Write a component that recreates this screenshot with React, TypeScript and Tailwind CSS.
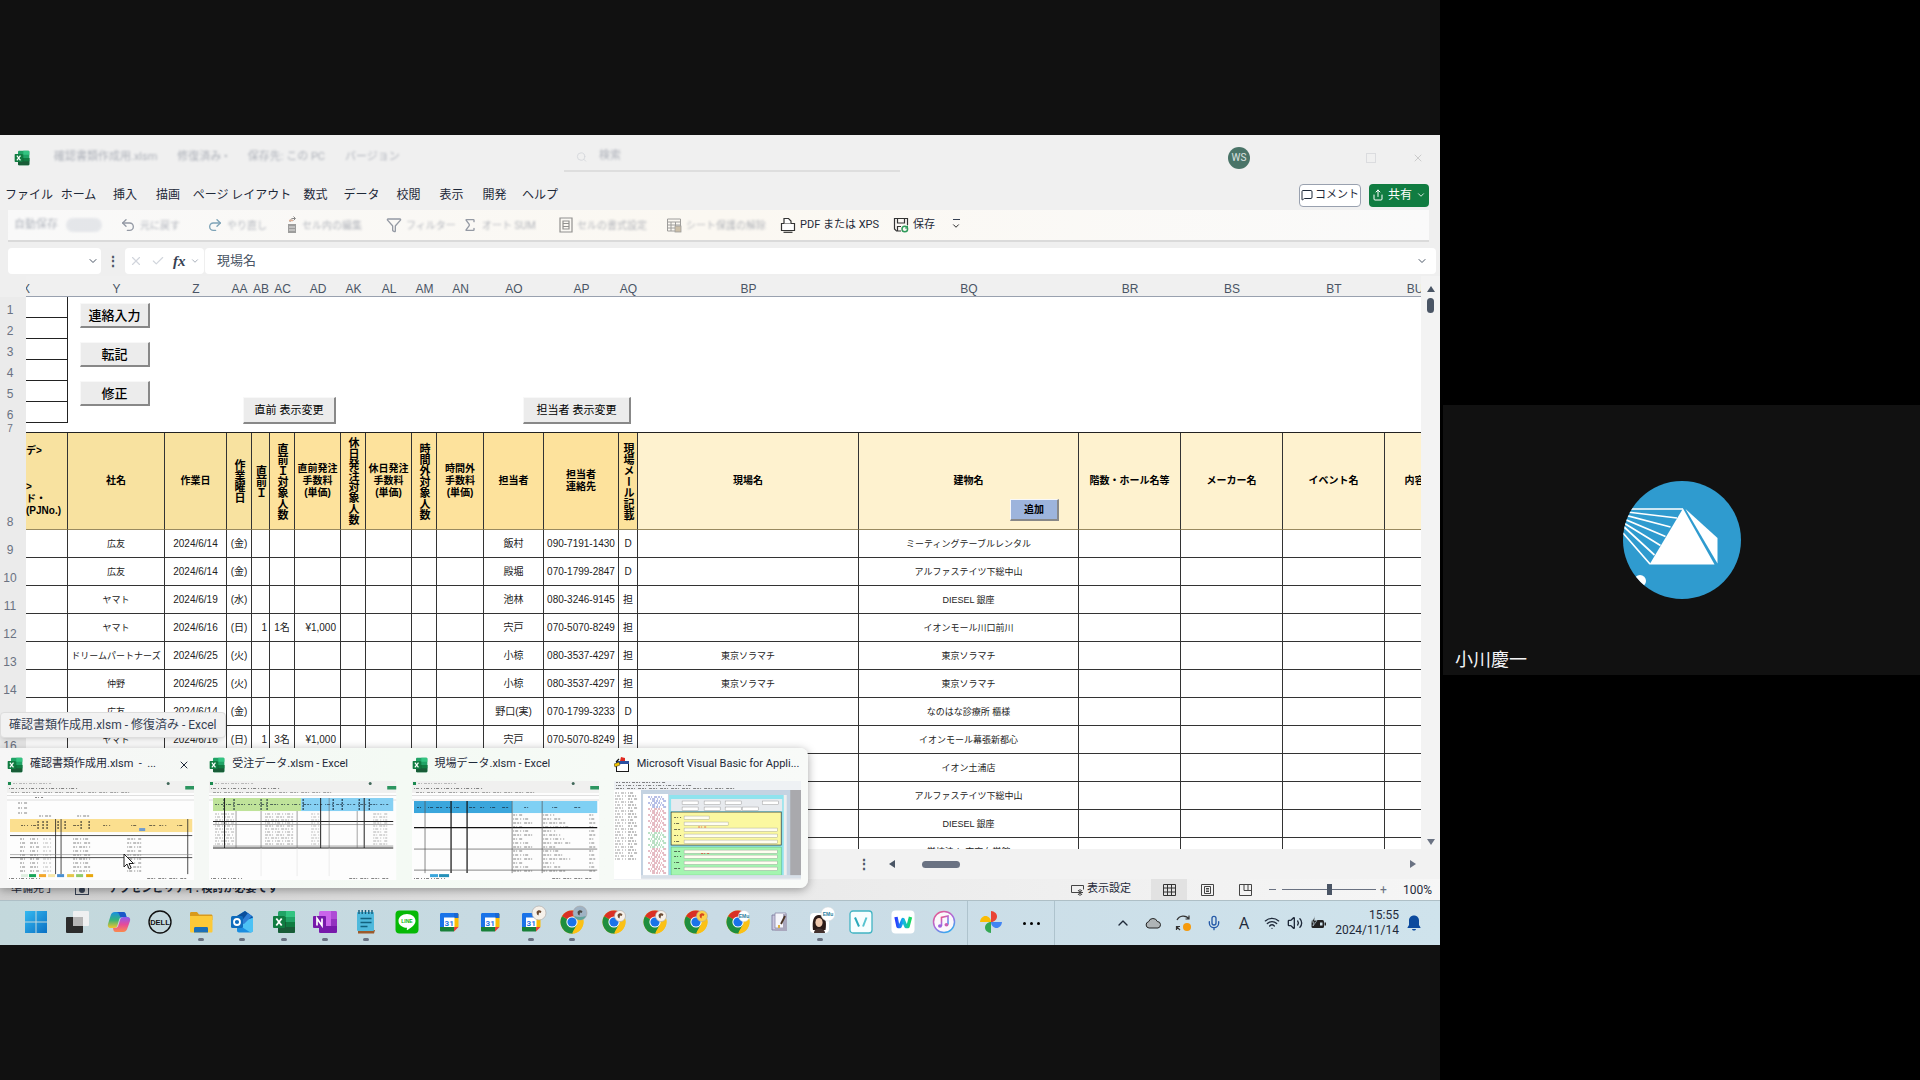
import React from "react";
import {
  ChevronDown,
  ChevronUp,
  Undo2,
  Redo2,
  Filter,
  Sigma,
  X,
  Check,
  Mic,
  Wifi,
  Volume2,
  MessageSquare,
  Search,
  Share,
} from "lucide-react";

/* ---------- sheet data ---------- */

type Column = {
  letter: string;
  width: string;
  title: string[];
  vertical?: boolean;
  tone: string;
  align?: string;
};

const WARM = "bg-[#f8e2a0]";
const WARM2 = "bg-[#fde29c]";
const PALE = "bg-[#fef2cf]";

const columns: Column[] = [
  { letter: "X", width: "w-[42px]", title: ["デ>", "", "", ">", "ド・", "(PJNo.)"], tone: WARM },
  { letter: "Y", width: "w-[97px]", title: ["社名"], tone: WARM },
  { letter: "Z", width: "w-[62px]", title: ["作業日"], tone: WARM },
  { letter: "AA", width: "w-[25px]", title: ["作業曜日"], vertical: true, tone: WARM },
  { letter: "AB", width: "w-[18px]", title: ["直前Ｉ"], vertical: true, tone: WARM, align: "text-right pr-[2px]" },
  { letter: "AC", width: "w-[25px]", title: ["直前Ｉ対象人数"], vertical: true, tone: WARM2 },
  { letter: "AD", width: "w-[46px]", title: ["直前発注", "手数料", "(単価)"], tone: WARM2, align: "text-right pr-1" },
  { letter: "AK", width: "w-[25px]", title: ["休日発注対象人数"], vertical: true, tone: WARM2 },
  { letter: "AL", width: "w-[46px]", title: ["休日発注", "手数料", "(単価)"], tone: WARM2 },
  { letter: "AM", width: "w-[25px]", title: ["時間外対象人数"], vertical: true, tone: WARM2 },
  { letter: "AN", width: "w-[47px]", title: ["時間外", "手数料", "(単価)"], tone: WARM2 },
  { letter: "AO", width: "w-[60px]", title: ["担当者"], tone: WARM2 },
  { letter: "AP", width: "w-[75px]", title: ["担当者", "連絡先"], tone: WARM2 },
  { letter: "AQ", width: "w-[19px]", title: ["現場メール記載"], vertical: true, tone: WARM2 },
  { letter: "BP", width: "w-[221px]", title: ["現場名"], tone: PALE },
  { letter: "BQ", width: "w-[220px]", title: ["建物名"], tone: PALE },
  { letter: "BR", width: "w-[102px]", title: ["階数・ホール名等"], tone: PALE },
  { letter: "BS", width: "w-[102px]", title: ["メーカー名"], tone: PALE },
  { letter: "BT", width: "w-[102px]", title: ["イベント名"], tone: PALE },
  { letter: "BU", width: "w-[60px]", title: ["内容"], tone: PALE },
];

type Row = Record<string, string>;

const rows: Row[] = [
  { Y: "広友", Z: "2024/6/14", AA: "(金)", AO: "飯村", AP: "090-7191-1430", AQ: "D", BQ: "ミーティングテーブルレンタル" },
  { Y: "広友", Z: "2024/6/14", AA: "(金)", AO: "殿堀", AP: "070-1799-2847", AQ: "D", BQ: "アルファステイツ下総中山" },
  { Y: "ヤマト", Z: "2024/6/19", AA: "(水)", AO: "池林", AP: "080-3246-9145", AQ: "担", BQ: "DIESEL 銀座" },
  { Y: "ヤマト", Z: "2024/6/16", AA: "(日)", AB: "1", AC: "1名", AD: "¥1,000", AO: "宍戸", AP: "070-5070-8249", AQ: "担", BQ: "イオンモール川口前川" },
  { Y: "ドリームパートナーズ", Z: "2024/6/25", AA: "(火)", AO: "小椋", AP: "080-3537-4297", AQ: "担", BP: "東京ソラマチ", BQ: "東京ソラマチ" },
  { Y: "仲野", Z: "2024/6/25", AA: "(火)", AO: "小椋", AP: "080-3537-4297", AQ: "担", BP: "東京ソラマチ", BQ: "東京ソラマチ" },
  { Y: "広友", Z: "2024/6/14", AA: "(金)", AO: "野口(実)", AP: "070-1799-3233", AQ: "D", BQ: "なのはな診療所 櫃様" },
  { Y: "ヤマト", Z: "2024/6/16", AA: "(日)", AB: "1", AC: "3名", AD: "¥1,000", AO: "宍戸", AP: "070-5070-8249", AQ: "担", BQ: "イオンモール幕張新都心" },
  { BQ: "イオン土浦店" },
  { BQ: "アルファステイツ下総中山" },
  { BQ: "DIESEL 銀座" },
  { BQ: "学校法人 東京女学館" },
];

const menus = [
  { label: "ファイル", width: "w-[50px]" },
  { label: "ホーム", width: "w-[49px]" },
  { label: "挿入", width: "w-[44px]" },
  { label: "描画", width: "w-[42px]" },
  { label: "ページ レイアウト", width: "w-[106px]" },
  { label: "数式", width: "w-[41px]" },
  { label: "データ", width: "w-[51px]" },
  { label: "校閲", width: "w-[43px]" },
  { label: "表示", width: "w-[43px]" },
  { label: "開発", width: "w-[43px]" },
  { label: "ヘルプ", width: "w-[48px]" },
];

/* ---------- icons ---------- */

function ExcelIcon({ className = "w-4 h-4" }: { className?: string }) {
  return (
    <svg viewBox="0 0 24 24" className={className} aria-hidden="true">
      <rect x="6" y="1" width="17" height="22" rx="1.500" fill="#21a366" />
      <path d="M6 12h17v9.500a1.500 1.500 0 0 1-1.500 1.500h-14A1.500 1.500 0 0 1 6 21.500z" fill="#185c37" />
      <path d="M14 1h7.500A1.500 1.500 0 0 1 23 2.500V7h-9z" fill="#33c481" />
      <path d="M6 7h8v5H6z" fill="#107c41" />
      <path d="M14 12h9v5h-9z" fill="#107c41" />
      <rect x="1" y="6" width="12" height="12" rx="1" fill="#107c41" />
      <path d="M4.300 8.500 9.700 15.500M9.700 8.500 4.300 15.500" stroke="#fff" strokeWidth="1.800" />
    </svg>
  );
}

function CellsIcon() {
  return (
    <svg viewBox="0 0 12 18" className="w-3 h-[18px]">
      <path d="M4 6c0-2 1-3.500 3-3.500h2M7.500.500l2 2-2 2" fill="none" stroke="#555" />
      <path d="M3 4.500h4" stroke="#d8906a" strokeWidth="1.500" />
      <path d="M2 8h8v9H2z" fill="#777" />
      <path d="M3 11h6M3 14h6" stroke="#ddd" />
    </svg>
  );
}

function FormatIcon() {
  return (
    <svg viewBox="0 0 14 16" className="w-3.5 h-4">
      <path d="M1 1h12v14H1z" fill="none" stroke="#666" strokeWidth="1.200" />
      <path d="M4 4h6v8H4zM4 6.500h6M4 9.500h6" fill="none" stroke="#666" strokeWidth="1.200" />
    </svg>
  );
}

function ProtectIcon() {
  return (
    <svg viewBox="0 0 16 16" className="w-4 h-4">
      <path d="M1.500 2h13v12h-13zM1.500 5h13M5 5v9M9.500 5v9M1.500 8h13M1.500 11h13" fill="none" stroke="#777" />
      <rect x="9" y="9" width="6" height="6" fill="#b8a78a" stroke="#777" strokeWidth="0.800" />
    </svg>
  );
}

function PdfIcon() {
  return (
    <svg viewBox="0 0 16 16" className="w-4 h-4">
      <path d="M1.500 6.500h13v7h-13z" fill="#fff" stroke="#333" strokeWidth="1.200" />
      <path d="M4 6.500V1.500h4.500l2.500 2.500v2.500" fill="#fff" stroke="#333" strokeWidth="1.200" />
      <path d="M3.500 15.300h9" stroke="#333" strokeWidth="1.200" />
    </svg>
  );
}

function SaveIcon() {
  return (
    <svg viewBox="0 0 16 16" className="w-4 h-4">
      <path d="M8 14H3.500L1.500 12V1.500h13V8" fill="none" stroke="#333" strokeWidth="1.200" />
      <path d="M4.500 1.500v4.500h7V1.500M4.500 14V9.500H8" fill="none" stroke="#333" strokeWidth="1.200" />
      <circle cx="11.800" cy="12" r="2.800" fill="none" stroke="#2f9a5a" strokeWidth="1.500" />
      <path d="M14.500 8.500V11H12" fill="none" stroke="#2f9a5a" />
    </svg>
  );
}

function WindowsIcon() {
  return (
    <svg viewBox="0 0 24 24" className="w-6 h-6">
      <defs>
        <linearGradient id="win" x1="0" y1="0" x2="1" y2="1">
          <stop offset="0" stopColor="#35b9f0" />
          <stop offset="1" stopColor="#0a70c4" />
        </linearGradient>
      </defs>
      <path d="M1 1h10.500v10.500H1zM12.500 1H23v10.500H12.500zM1 12.500h10.500V23H1zM12.500 12.500H23V23H12.500z" fill="url(#win)" />
    </svg>
  );
}

function TaskViewIcon() {
  return (
    <svg viewBox="0 0 24 24" className="w-6 h-6">
      <rect x="1" y="7" width="17" height="16" rx="1" fill="#2c2c2c" />
      <rect x="8" y="1" width="16" height="15" rx="1" fill="#f2f2f2" fillOpacity="0.92" />
      <path d="M8 7h10v9H8z" fill="#b5b5b5" />
    </svg>
  );
}

function CopilotIcon() {
  return (
    <svg viewBox="0 0 24 24" className="w-6 h-6">
      <defs>
        <linearGradient id="cpa" x1="0" y1="0" x2="0" y2="1">
          <stop offset="0" stopColor="#1a8fe3" />
          <stop offset="0.500" stopColor="#35b37a" />
          <stop offset="1" stopColor="#f5c52b" />
        </linearGradient>
        <linearGradient id="cpb" x1="0" y1="0" x2="0" y2="1">
          <stop offset="0" stopColor="#8b5cf0" />
          <stop offset="0.500" stopColor="#e64a9a" />
          <stop offset="1" stopColor="#fb8a4c" />
        </linearGradient>
      </defs>
      <path d="M8 2h8c2 0 2.500 1 3 3l.5 2h-4c-2 0-3 1-3.500 3l-1.500 5c-.5 2-1.500 3-3 3H4c-3 0-3.500-2-3-4l2.500-8C4.200 3.500 5.500 2 8 2z" fill="url(#cpa)" />
      <path d="M16 22H9c-2 0-2.500-1-3-4h2c2 0 3-1 3.500-3L13 10c.5-2 1.500-3 3.500-3H20c3 0 3.500 2 3 4l-2.500 7c-.8 2.500-2 4-4.500 4z" fill="url(#cpb)" />
      <path d="M8 2h8c2 0 2.500 1 3 3l.5 2h-4c-1 0-1.500.2-2 .6L12 4c-.5-1.500-1.500-2-4-2z" fill="#1b57c8" />
    </svg>
  );
}

function DellIcon() {
  return (
    <svg viewBox="0 0 24 24" className="w-6 h-6">
      <circle cx="12" cy="12" r="11" fill="none" stroke="#111" strokeWidth="1.400" />
      <text x="12" y="15" textAnchor="middle" fontSize="7.500" fontWeight="bold" fontFamily="Liberation Sans, sans-serif" fill="#111">DELL</text>
    </svg>
  );
}

function FolderIcon() {
  return (
    <svg viewBox="0 0 24 24" className="w-6 h-6">
      <path d="M1 3.500C1 2.500 1.500 2 2.500 2H8l2 2.500h12c1 0 1.500.5 1.500 1.500v4H1z" fill="#d99a1c" />
      <path d="M1 6h21.500c.5 0 1 .5 1 1v14c0 1-.5 1.500-1.500 1.500H2.500C1.500 22.500 1 22 1 21z" fill="#fcc938" />
      <path d="M5 22.500v-4c0-1 .5-1.500 1.500-1.500h11c1 0 1.500.5 1.500 1.500v4z" fill="#1a6fb8" />
    </svg>
  );
}

function OutlookIcon() {
  return (
    <svg viewBox="0 0 24 24" className="w-6 h-6">
      <path d="M7 6 15 1l8 6v13c0 1.500-1 2.500-2.500 2.500H9C7.800 22.500 7 21.800 7 20.500z" fill="#1a8de0" />
      <path d="m7 6 8-5 8 6-9 7z" fill="#0b4f9c" />
      <path d="M7 12l16-4v12.500c0 1.200-1 2-2.500 2L7 14z" fill="#4cc2f5" />
      <path d="m10 13 8-10 4 3-8 8z" fill="#2f7fd6" />
      <rect x="1" y="6" width="12" height="12" rx="1.500" fill="#0f6cbd" />
      <circle cx="7" cy="12" r="3" fill="none" stroke="#fff" strokeWidth="1.800" />
    </svg>
  );
}

function OneNoteIcon() {
  return (
    <svg viewBox="0 0 24 24" className="w-6 h-6">
      <rect x="6" y="1" width="18" height="22" rx="1.500" fill="#ca64ea" />
      <path d="M18 1h4.500A1.500 1.500 0 0 1 24 2.500V9h-6z" fill="#ae4bd5" />
      <path d="M18 9h6v7h-6z" fill="#9332bf" />
      <path d="M6 16h18v5.500a1.500 1.500 0 0 1-1.500 1.500h-15A1.500 1.500 0 0 1 6 21.500z" fill="#7719aa" />
      <rect x="0" y="6" width="13" height="12" rx="1" fill="#7719aa" />
      <path d="M4 15.500v-7l5 7v-7" fill="none" stroke="#fff" strokeWidth="1.700" />
    </svg>
  );
}

function NotepadIcon() {
  return (
    <svg viewBox="0 0 24 24" className="w-6 h-6">
      <path d="M4 20h17l-1 3.500H4z" fill="#9c5a2c" />
      <rect x="3" y="2" width="17" height="19" rx="1" fill="#4fb9dc" />
      <path d="M5 0v4M8.200 0v4M11.500 0v4M14.800 0v4M18 0v4" stroke="#155a78" strokeWidth="1.400" />
      <path d="M6.500 8.500h11M6.500 12.500h11M6.500 16.500h7" stroke="#12627f" strokeWidth="1.500" />
    </svg>
  );
}

function LineIcon() {
  return (
    <svg viewBox="0 0 24 24" className="w-6 h-6">
      <rect x="0.500" y="0.500" width="23" height="23" rx="4" fill="#06b906" />
      <path d="M12 4c4.800 0 8.500 3 8.500 7 0 3.500-4 6.500-8 9-.6.400-.8 0-.7-.600l.2-1.600C7 17.700 3.500 14.800 3.500 11c0-4 3.700-7 8.500-7z" fill="#fff" />
      <text x="12" y="13" textAnchor="middle" fontSize="5" fontWeight="bold" fontFamily="Liberation Sans, sans-serif" fill="#06b906">LINE</text>
    </svg>
  );
}

function Badge({ kind, cx = 19, cy = 5, r = 5.5 }: { kind: string; cx?: number; cy?: number; r?: number }) {
  if (kind === "none") return null;
  if (kind === "text") {
    return (
      <g>
        <circle cx={cx} cy={cy} r={r} fill="#fff" stroke="#cfd6da" strokeWidth="0.500" />
        <text x={cx} y={cy + 2} textAnchor="middle" fontSize="5" fontWeight="bold" fontFamily="Liberation Sans, sans-serif" fill="#2b7f9e">EMu</text>
      </g>
    );
  }
  const fill = kind === "yellow" ? "#fbd24a" : kind === "photo" ? "#9fb3c4" : "#f6f1ea";
  const ink = kind === "yellow" ? "#d9481c" : kind === "photo" ? "#4c4a45" : "#6b4a32";
  return (
    <g>
      <circle cx={cx} cy={cy} r={r} fill={fill} stroke="#a9a5a2" strokeWidth="0.600" />
      <path d={`M${cx - 2.5} ${cy - 1}c1-2 3.500-2.500 5-.5l-1 1.500-1.500-.5-.5 3-1.500-1z`} fill={ink} />
      {kind === "photo" && <path d={`M${cx - 6} ${cy + 3}q6 2 12 0-2 4-6 4t-6-4z`} fill="#5fa39a" />}
    </g>
  );
}

function CalendarIcon({ badge = "none" }: { badge?: string }) {
  return (
    <svg viewBox="0 0 24 24" className="w-6 h-6 overflow-visible">
      <path d="M3 4.500C3 3.500 3.700 3 4.500 3H17v5H7v13H4.500C3.700 21 3 20.300 3 19.500z" fill="#1a73e8" />
      <path d="M17 3h3c1 0 1.500.6 1.500 1.500V17H17z" fill="#fbbc04" />
      <path d="M17 3h3c1 0 1.500.6 1.500 1.500V8H17z" fill="#1967d2" />
      <path d="M3 17h14v4.500H4.500C3.600 21.500 3 21 3 20z" fill="#188038" />
      <path d="M17 17h4.500L17 21.500z" fill="#ea4335" />
      <path d="M7 7.500h10.500V17H7z" fill="#fff" />
      <text x="12.200" y="15.500" textAnchor="middle" fontSize="8" fontFamily="Roboto, sans-serif" fill="#1a73e8" fontWeight="bold">31</text>
      <Badge kind={badge} cx={20} cy={3} r={7} />
    </svg>
  );
}

function ChromeIcon({ badge }: { badge: string }) {
  const large = badge === "photo";
  return (
    <svg viewBox="0 0 24 24" className="w-6 h-6 overflow-visible">
      <circle cx="12" cy="12" r="11.500" fill="#fbc116" />
      <path d="M12 12 2 6.300A11.500 11.500 0 0 1 22 6.300z" fill="#d93025" />
      <path d="M2 6.300 12 12l1 11.400A11.500 11.500 0 0 1 2 6.300z" fill="#1e8e3e" />
      <path d="m12 23.500 5-9-5-2.500-5 2z" fill="#1e8e3e" />
      <path d="m17.200 14.500-5.200 9A11.500 11.500 0 0 0 22 6.300H12z" fill="#fbc116" />
      <circle cx="12" cy="12" r="5.600" fill="#fff" />
      <circle cx="12" cy="12" r="4.600" fill="#1a73e8" />
      <Badge kind={badge} cx={large ? 20 : 18} cy={large ? 3 : 6} r={large ? 7 : 5.5} />
    </svg>
  );
}

function NotesAppIcon() {
  return (
    <svg viewBox="0 0 24 24" className="w-6 h-6">
      <path d="M5 5h9v15H5z" fill="#c8c5dd" stroke="#77749a" strokeWidth="0.800" />
      <path d="M8 3h11v15H8z" fill="#f5f5fb" stroke="#8c89a8" strokeWidth="0.800" />
      <path d="M16 4h4v17H8v-3h8z" fill="#a9a7bd" />
      <path d="m18 6-4 8" stroke="#4a3526" strokeWidth="1.800" />
      <path d="M12 15v3" stroke="#e0b040" strokeWidth="2" />
    </svg>
  );
}

function PortraitIcon() {
  return (
    <svg viewBox="0 0 24 24" className="w-6 h-6 overflow-visible">
      <rect x="2" y="3" width="19" height="20" rx="4" fill="#fff" />
      <path d="M5 20C4 12 5 5 11 5s8 6 6.500 15z" fill="#2b1a17" />
      <ellipse cx="11" cy="12.500" rx="3.600" ry="4.600" fill="#f0c9ae" />
      <path d="M6 23c0-3 2-4.500 5-4.500s6 1.500 6 4.500z" fill="#42302d" />
      <Badge kind="text" cx={20} cy={4} r={7} />
    </svg>
  );
}

function VIcon() {
  return (
    <svg viewBox="0 0 24 24" className="w-6 h-6">
      <rect x="1" y="1" width="22" height="22" rx="3" fill="#f7feff" stroke="#42b4c4" strokeWidth="1.300" />
      <path d="m6 7.500 4 9" stroke="#2aa9bb" strokeWidth="2" />
      <path d="m17.500 7.500-3.500 9" stroke="#56c3d0" strokeWidth="2" />
    </svg>
  );
}

function WIcon() {
  return (
    <svg viewBox="0 0 24 24" className="w-6 h-6">
      <defs>
        <linearGradient id="wgrad" x1="0" y1="0" x2="1" y2="0">
          <stop offset="0" stopColor="#2b3bff" />
          <stop offset="0.500" stopColor="#10b5e8" />
          <stop offset="1" stopColor="#18d860" />
        </linearGradient>
      </defs>
      <rect x="0.500" y="0.500" width="23" height="23" rx="4" fill="#fff" />
      <path d="M5 7l2 9.500h2l3-7 3 7h2L19.500 7" fill="none" stroke="url(#wgrad)" strokeWidth="3.400" strokeLinejoin="round" />
    </svg>
  );
}

function MusicIcon() {
  return (
    <svg viewBox="0 0 24 24" className="w-6 h-6">
      <defs>
        <linearGradient id="mus" x1="0" y1="0" x2="0.600" y2="1">
          <stop offset="0" stopColor="#f2557f" />
          <stop offset="0.600" stopColor="#a86be0" />
          <stop offset="1" stopColor="#3aa7ee" />
        </linearGradient>
      </defs>
      <circle cx="12" cy="12" r="10.500" fill="#fbf7fb" stroke="url(#mus)" strokeWidth="1.500" />
      <path d="M9.500 16V7.500l6.500-1.500v8.500" fill="none" stroke="url(#mus)" strokeWidth="1.600" />
      <ellipse cx="8" cy="16" rx="2" ry="1.700" fill="#a05fdc" />
      <ellipse cx="14.500" cy="14.700" rx="2" ry="1.700" fill="#c95fb8" />
    </svg>
  );
}

function PhotosIcon() {
  return (
    <svg viewBox="0 0 24 24" className="w-6 h-6">
      <path d="M12 12V1c3.500.3 6 2.700 6 5.500S15.500 12 12 12z" fill="#ea4335" />
      <path d="M12 12h11c-.3 3.500-2.700 6-5.500 6S12 15.500 12 12z" fill="#4285f4" />
      <path d="M12 12v11c-3.500-.3-6-2.700-6-5.500S8.500 12 12 12z" fill="#34a853" />
      <path d="M12 12H1c.3-3.500 2.700-6 5.500-6S12 8.500 12 12z" fill="#fbbc04" />
    </svg>
  );
}

function VbaIcon() {
  return (
    <svg viewBox="0 0 16 16" className="w-4 h-4">
      <rect x="2.500" y="4.500" width="12" height="10" fill="#fff" stroke="#1a1a1a" />
      <path d="M2 4h13v3H2z" fill="#2a4fa0" />
      <path d="M7 0 11 1v3H6z" fill="#e02a20" />
      <path d="M0 7l5-2 1 3-5 2z" fill="#f2c500" stroke="#222" strokeWidth="0.500" />
      <path d="M5 2 2 5" stroke="#111" strokeWidth="1.200" />
    </svg>
  );
}

/* ---------- window previews ---------- */

const DASH = ["2 1 1 2 3 1", "1 1 3 2 1 2", "3 1 2 1 1 3"];

function Scribble({ x, y, w, color = "#444", i = 0 }: { x: number; y: number; w: number; color?: string; i?: number }) {
  return <path d={`M${x} ${y}h${w}`} stroke={color} strokeWidth="1" strokeOpacity="0.650" strokeDasharray={DASH[i % 3]} />;
}

function range(from: number, to: number, step: number) {
  const out: number[] = [];
  for (let v = from; v <= to; v += step) out.push(v);
  return out;
}

function PreviewChrome({ children }: { children: React.ReactNode }) {
  return (
    <svg viewBox="0 0 187 99" className="w-full h-auto" aria-hidden="true">
      <rect width="187" height="99" fill="#fdfdfd" />
      <rect width="187" height="12" fill="#f0f0ef" />
      <rect x="1" y="1" width="3" height="3" fill="#1c8a50" />
      <Scribble x={6} y={2.5} w={38} color="#999" />
      <circle cx="161" cy="2.500" r="1.500" fill="#41685a" />
      <Scribble x={2} y={7.5} w={70} i={1} />
      <rect x="178" y="5" width="9" height="3.500" fill="#2d9560" />
      <Scribble x={4} y={11.5} w={120} i={2} color="#777" />
      <path d="M0 14.500h187M0 19h187" stroke="#c9c9c9" strokeWidth="0.600" />
      {children}
      <Scribble x={2} y={97.5} w={32} i={1} />
      <Scribble x={140} y={97.5} w={40} i={2} />
    </svg>
  );
}

function PreviewOrders() {
  return (
    <PreviewChrome>
      <Scribble x={28} y={16.5} w={8} />
      {[22, 27, 32].map((y) => (
        <Scribble key={y} x={11} y={y} w={9} />
      ))}
      <Scribble x={32} y={35} w={12} />
      <Scribble x={70} y={35} w={13} />
      <rect x="3" y="38" width="182" height="13" fill="#fbdf8f" />
      {[14, 24, 66, 96, 124, 142, 152, 170].map((x, i) => (
        <Scribble key={x} x={x} y={44.5} w={7} i={i} color="#222" />
      ))}
      {[31, 36, 40, 51, 58, 74, 82].map((x) => (
        <path key={x} d={`M${x} 40v9`} stroke="#222" strokeWidth="1" strokeDasharray="2 1" />
      ))}
      <rect x="132" y="47" width="6" height="3" fill="#6f9bd0" />
      {range(58, 90, 4).map((y, i) => (
        <g key={y}>
          <Scribble x={13} y={y} w={5} i={i} />
          <Scribble x={23} y={y} w={10} i={i + 1} />
          <Scribble x={36} y={y} w={8} i={i} color="#999" />
          <Scribble x={66} y={y} w={17} i={i + 1} />
          <Scribble x={120} y={y} w={14} i={i + 2} />
        </g>
      ))}
      <path d="M3 54.500h182M3 76.500h182M48.500 38v55M54 38v55M180.500 38v55" stroke="#222" strokeWidth="0.800" />
      <path d="M3 73.500h182" stroke="#888" strokeWidth="0.600" />
      {[["14", "#dfeee0"], ["22", "#18a558"], ["32", "#f3a72b"], ["41", "#f5e6a8"], ["50", "#4a8fd0"], ["60", "#e5c64a"], ["69", "#8fca6a"], ["79", "#e8a70e"]].map(([x, fill]) => (
        <rect key={x} x={x} y="93" width="7" height="3" fill={fill} />
      ))}
    </PreviewChrome>
  );
}

function PreviewReceived() {
  return (
    <PreviewChrome>
      <rect x="4" y="17" width="88" height="13" fill="#bfe39a" />
      <rect x="92" y="17" width="92" height="13" fill="#86d0f3" />
      {range(6, 176, 11).map((x, i) => (
        <Scribble key={x} x={x} y={23.5} w={8} i={i} color="#123" />
      ))}
      {[15, 25, 52, 58, 94, 124, 133, 150, 160].map((x) => (
        <path key={x} d={`M${x} 18v11`} stroke="#123" strokeWidth="1" strokeDasharray="2 1" />
      ))}
      {range(33, 64, 3).map((y, i) => (
        <g key={y}>
          <Scribble x={6} y={y} w={20} i={i} color="#888" />
          <Scribble x={56} y={y} w={28} i={i + 1} color="#777" />
          <Scribble x={102} y={y} w={8} i={i} color="#999" />
          <Scribble x={164} y={y} w={14} i={i + 2} color="#888" />
        </g>
      ))}
      <path d="M15.500 17v50M111.500 17v50M155 17v50M4 40.500h180M4 67h180" stroke="#222" strokeWidth="1" />
      <path d="M27 30v37M52 30v37M88 30v37M120 17v50M148 30v37M4 43.500h180M4 65h180" stroke="#666" strokeWidth="0.600" />
      <path d="M52 67v28M88 67v28M120 67v28" stroke="#ddd" strokeWidth="0.500" />
    </PreviewChrome>
  );
}

function PreviewSites() {
  return (
    <PreviewChrome>
      <rect x="2" y="20" width="98" height="12" fill="#3aa6dc" />
      <rect x="100" y="20" width="85" height="12" fill="#7fd0f4" />
      {[5, 16, 24, 34, 42, 57, 68, 78, 90, 112, 140, 162].map((x, i) => (
        <Scribble key={x} x={x} y={26.5} w={6} i={i} color="#123" />
      ))}
      {range(34, 92, 4).map((y, i) => (
        <g key={y}>
          <Scribble x={101} y={y} w={10 + (i % 3) * 6} i={i} />
          <Scribble x={131} y={y} w={12 + (i % 4) * 5} i={i + 1} />
          <Scribble x={177} y={y} w={6} i={i} />
        </g>
      ))}
      <path d="M39 20v72M55 20v72M2 46.500h183" stroke="#111" strokeWidth="1.200" />
      <path d="M13 20v72M100 20v72M130 20v72M2 68h183M2 89h183" stroke="#555" strokeWidth="0.700" />
      <rect x="18" y="93" width="8" height="3" fill="#3aa6dc" />
      <rect x="27" y="93" width="10" height="3" fill="#2590b8" />
    </PreviewChrome>
  );
}

function PreviewVba() {
  return (
    <svg viewBox="0 0 187 99" className="w-full h-auto" aria-hidden="true">
      <rect width="187" height="99" fill="#eef1f4" />
      <Scribble x={2} y={1.5} w={50} />
      <Scribble x={2} y={4.5} w={75} i={1} />
      <Scribble x={2} y={7.5} w={120} i={2} />
      <rect x="0" y="9" width="187" height="88" fill="#a9a9ad" />
      <rect x="0" y="9" width="27" height="89" fill="#fff" />
      <rect x="27" y="9" width="149" height="88" fill="#c4d3e2" />
      <rect x="29" y="13" width="25" height="82" fill="#fff" />
      {range(12, 80, 3).map((y, i) => (
        <g key={y}>
          <Scribble x={1} y={y} w={11} i={i} color="#666" />
          <Scribble x={14} y={y} w={6 + (i % 3) * 2} i={i + 1} />
        </g>
      ))}
      {range(16, 93, 2).map((y, i) => (
        <Scribble key={y} x={34 + (i % 3) * 2} y={y} w={14} i={i} color={y < 28 ? "#2038b0" : y > 50 && y < 68 ? "#28a048" : "#b03048"} />
      ))}
      <rect x="55" y="14" width="116" height="80" fill="#8fe3ee" />
      <rect x="57" y="18" width="111" height="12" fill="#e7eaee" />
      {[60, 82, 103, 140].map((x) => (
        <rect key={x} x={x + 8} y="20" width="16" height="3.500" fill="#fff" stroke="#888" strokeWidth="0.400" />
      ))}
      {[60, 82, 103, 120].map((x) => (
        <rect key={x} x={x + 8} y="26" width="16" height="3.500" fill="#fff" stroke="#888" strokeWidth="0.400" />
      ))}
      <rect x="57" y="31" width="110" height="33" fill="#fbf8a0" stroke="#333" strokeWidth="0.700" />
      <rect x="57" y="66" width="110" height="28" fill="#a4f5b0" stroke="#5bb870" strokeWidth="0.500" />
      {[35, 41, 47, 53, 59, 69, 74, 80, 86].map((y, i) => (
        <g key={y}>
          <Scribble x={60} y={y + 1.5} w={7} i={i} color="#222" />
          <rect x="70" y={y} width={i === 0 ? 25 : i === 1 ? 44 : 93} height="3.200" fill="#fffef0" stroke="#999" strokeWidth="0.400" />
        </g>
      ))}
      <Scribble x={84} y={46} w={8} color="#e03020" />
      <Scribble x={87} y={72.5} w={8} color="#e03020" />
      <path d="M171 14v82" stroke="#eee" strokeWidth="3" />
      <rect x="27" y="94" width="160" height="3" fill="#d8e0e8" />
    </svg>
  );
}

const previews = [
  { title: "確認書類作成用.xlsm  -  ...", icon: <ExcelIcon />, body: <PreviewOrders />, close: true },
  { title: "受注データ.xlsm - Excel", icon: <ExcelIcon />, body: <PreviewReceived /> },
  { title: "現場データ.xlsm - Excel", icon: <ExcelIcon />, body: <PreviewSites /> },
  { title: "Microsoft Visual Basic for Appli...", icon: <VbaIcon />, body: <PreviewVba /> },
];

/* ---------- Excel window ---------- */

function TitleBar() {
  return (
    <header className="h-[45px] shrink-0 flex items-center bg-[#f0f0f0] pl-3.5 pr-4">
      <ExcelIcon />
      <div className="flex items-center ml-6 gap-5 text-[11px] text-gray-500 opacity-50 blur-[1px] whitespace-nowrap">
        <span>確認書類作成用.xlsm</span>
        <span>修復済み •</span>
        <span>保存先: この PC</span>
        <span>バージョン</span>
      </div>
      <label className="ml-auto mr-[328px] w-[336px] h-7 flex items-center gap-3 px-3 border-b-2 border-[#dedede] text-gray-400">
        <Search className="w-3 h-3 opacity-30" />
        <input aria-label="検索" placeholder="検索" className="w-full bg-transparent text-[11px] outline-none placeholder:text-gray-500 opacity-50 blur-[1px]" />
      </label>
      <div className="w-[22px] h-[22px] shrink-0 rounded-full bg-[#4a7468] text-white/80 text-[10px] flex items-center justify-center">WS</div>
      <div className="flex items-center gap-9 ml-[116px] opacity-15">
        <button aria-label="元に戻す (縮小)" className="w-2.5 h-2.5 border border-gray-500" />
        <button aria-label="閉じる">
          <X className="w-3 h-3" />
        </button>
      </div>
    </header>
  );
}

function MenuBar() {
  return (
    <nav className="h-[30px] shrink-0 flex items-center justify-between bg-[#f0f0f0] pl-1 pr-[11px]">
      <div className="flex">
        {menus.map((m) => (
          <button key={m.label} className={`${m.width} shrink-0 text-[12px] text-gray-800 whitespace-nowrap text-center`}>
            {m.label}
          </button>
        ))}
      </div>
      <div className="flex gap-2">
        <button className="w-[62px] h-[23px] flex items-center justify-center gap-[2px] bg-white border border-gray-400 rounded-sm text-[11px] text-gray-800 whitespace-nowrap">
          <MessageSquare className="w-3 h-3 shrink-0" />
          コメント
        </button>
        <button className="w-[60px] h-[23px] flex items-center justify-center gap-1 bg-[#107c41] rounded-sm text-[12px] text-white whitespace-nowrap">
          <Share className="w-3 h-3" />
          共有
          <ChevronDown className="w-2.5 h-2.5" />
        </button>
      </div>
    </nav>
  );
}

const faded = [
  { label: "元に戻す", width: "w-[87px]", icon: <Undo2 className="w-4 h-4" /> },
  { label: "やり直し", width: "w-[79px]", icon: <Redo2 className="w-4 h-4 text-[#4a7f9c]" /> },
  { label: "セル内の編集", width: "w-[100px]", icon: <CellsIcon /> },
  { label: "フィルター", width: "w-[76px]", icon: <Filter className="w-4 h-4" /> },
  { label: "オート SUM", width: "w-[97px]", icon: <Sigma className="w-4 h-4" /> },
  { label: "セルの書式設定", width: "w-[107px]", icon: <FormatIcon /> },
  { label: "シート保護の解除", width: "w-[114px]", icon: <ProtectIcon /> },
];

function QuickAccess() {
  return (
    <div className="h-[32px] shrink-0 ml-2 mr-[11px] flex items-center bg-gradient-to-r from-[#f9f9f9] via-[#fbf8f2] to-[#fafafa] border-b-2 border-[#dadada] pl-1.5 text-[11px] whitespace-nowrap">
      <label className="w-[106px] shrink-0 flex items-center gap-2 text-gray-500 opacity-50 blur-[1px]">
        自動保存
        <input type="checkbox" className="appearance-none w-9 h-3.5 rounded-full bg-gray-300" />
      </label>
      {faded.map((f) => (
        <button key={f.label} className={`${f.width} shrink-0 flex items-center gap-1 text-gray-500`}>
          <span className="shrink-0 opacity-70">{f.icon}</span>
          <span className="opacity-50 blur-[1px] text-[10px]">{f.label}</span>
        </button>
      ))}
      <button className="w-[113px] shrink-0 flex items-center gap-1 text-gray-800">
        <PdfIcon />
        PDF または XPS
      </button>
      <button className="w-[58px] shrink-0 flex items-center gap-1 text-gray-800">
        <SaveIcon />
        保存
      </button>
      <button aria-label="クイック アクセス ツール バーのユーザー設定" className="flex flex-col items-center gap-px">
        <span className="w-[7px] h-px bg-gray-700" />
        <ChevronDown className="w-2.5 h-2.5" />
      </button>
    </div>
  );
}

function FormulaBar() {
  return (
    <div className="h-[34px] shrink-0 flex items-center pl-2 pr-1 bg-[#efefef] pt-1">
      <div className="w-[93px] h-[26px] shrink-0 flex items-center bg-white rounded-sm pr-0.5">
        <input aria-label="名前ボックス" className="w-full min-w-0 text-[12px] outline-none" />
        <ChevronDown className="w-3 h-3 shrink-0 text-gray-600" />
      </div>
      <span className="w-6 shrink-0 text-center text-[14px] font-bold text-gray-600 leading-none">⋮</span>
      <div className="w-[79px] h-[26px] shrink-0 flex items-center bg-white rounded-sm pl-1 gap-2">
        <X className="w-3.5 h-3.5 text-gray-300" />
        <Check className="w-3.5 h-3.5 text-gray-300" />
        <span className="font-['Liberation_Serif'] italic font-bold text-[15px] leading-none text-gray-700">fx</span>
        <ChevronDown className="w-2.5 h-2.5 -ml-1 text-gray-400" />
      </div>
      <label className="flex-1 h-[26px] ml-px flex items-center bg-white rounded-sm pl-3 pr-2">
        <input aria-label="数式バー" defaultValue="現場名" className="flex-1 bg-transparent text-[13px] text-gray-600 outline-none" />
        <ChevronDown className="w-3 h-3 text-gray-600" />
      </label>
    </div>
  );
}

function FormButton({ className, children }: { className: string; children: React.ReactNode }) {
  return (
    <button className={`absolute border-t border-l border-[#f8f8f8] border-b-2 border-r-2 border-b-[#888] border-r-[#888] text-black whitespace-nowrap leading-none ${className}`}>
      {children}
    </button>
  );
}

function HeaderText({ column }: { column: Column }) {
  if (column.vertical) {
    return (
      <span className="inline-block [writing-mode:vertical-rl] text-[11px] leading-[12px] whitespace-nowrap align-middle">
        {column.title[0]}
      </span>
    );
  }
  return (
    <>
      {column.title.map((line, i) => (
        <span key={i} className="block h-3 whitespace-nowrap">
          {line}
        </span>
      ))}
    </>
  );
}

function Sheet() {
  const head = "w-[26px] align-bottom font-normal text-[12px] leading-[12px] text-gray-500 bg-[#ebebeb] p-0 pr-1.5 text-center";
  return (
    <div className="flex-1 min-h-0 flex bg-[#f3f3f3]">
      <div className="relative flex-1 min-w-0 overflow-hidden bg-white">
        <table className="table-fixed w-[1421px] border-separate border-spacing-0 text-[10px] leading-[12px] text-[#222]">
          <thead>
            <tr className="h-[21px]">
              <th className="w-[26px] bg-[#efefef] p-0" />
              {columns.map((c) => (
                <th
                  key={c.letter}
                  className={`${c.width} p-0 bg-[#f0f0f0] border-b border-gray-400 font-normal text-[12px] leading-[14px] text-gray-600 overflow-hidden pt-[6px] ${
                    c.letter === "X" ? "text-left indent-[-4px]" : "text-center"
                  }`}
                >
                  {c.letter}
                </th>
              ))}
            </tr>
          </thead>
          <tbody>
            {[1, 2, 3, 4, 5, 6].map((n) => (
              <tr key={n} className="h-[21px]">
                <th className={`${head} pb-[2px]`}>{n}</th>
                <td className="p-0 border-b border-r border-[#222]" />
                <td colSpan={19} className="p-0" />
              </tr>
            ))}
            <tr className="h-[10px]">
              <th className={`${head} h-[10px] overflow-hidden`}>
                <span className="block h-[9px] leading-[9px] text-[10px] overflow-hidden">7</span>
              </th>
              <td colSpan={20} className="p-0 border-b border-[#222]" />
            </tr>
            <tr className="h-[97px]">
              <th className={`${head} pb-[2px]`}>8</th>
              {columns.map((c) => (
                <td
                  key={c.letter}
                  className={`${c.tone} p-0 border-b border-r border-b-[#998a60] border-r-[#333] font-bold text-black overflow-hidden ${
                    c.letter === "X" ? "text-left" : "text-center"
                  }`}
                >
                  <HeaderText column={c} />
                </td>
              ))}
            </tr>
            {rows.map((r, i) => (
              <tr key={i} className="h-[28px]">
                <th className={`${head} pb-[2px]`}>{i + 9}</th>
                {columns.map((c) => (
                  <td
                    key={c.letter}
                    className={`p-0 border-b border-r border-[#333] whitespace-nowrap overflow-hidden ${c.align ?? "text-center"} ${
                      c.letter === "Y" || c.letter === "BQ" || c.letter === "BP" ? "text-[9px]" : ""
                    }`}
                  >
                    {r[c.letter] ?? ""}
                  </td>
                ))}
              </tr>
            ))}
          </tbody>
        </table>

        <FormButton className="left-20 top-[27px] w-[70px] h-[25px] bg-[#ececec] text-[13px] font-medium">連絡入力</FormButton>
        <FormButton className="left-20 top-[66px] w-[70px] h-[25px] bg-[#ececec] text-[13px] font-medium">転記</FormButton>
        <FormButton className="left-20 top-[105px] w-[70px] h-[25px] bg-[#ececec] text-[13px] font-medium">修正</FormButton>
        <FormButton className="left-[243px] top-[121px] w-[93px] h-[27px] bg-[#ececec] text-[11px]">直前 表示変更</FormButton>
        <FormButton className="left-[523px] top-[121px] w-[108px] h-[27px] bg-[#ececec] text-[11px]">担当者 表示変更</FormButton>
        <FormButton className="left-[1010px] top-[223px] w-[49px] h-[22px] bg-[#9db4dc] text-[10px] font-bold">追加</FormButton>
      </div>
      <div className="w-[19px] shrink-0 flex flex-col items-center pt-2.5 pb-1">
        <span className="border-x-4 border-b-[6px] border-x-transparent border-b-gray-600" />
        <span className="mt-1.5 w-[7px] h-[15px] bg-gray-600 rounded-sm" />
        <span className="mt-auto border-x-4 border-t-[6px] border-x-transparent border-t-gray-500" />
      </div>
    </div>
  );
}

function StatusBar() {
  return (
    <>
      <div className="h-[30px] shrink-0 flex items-center justify-end bg-[#f2f2f2] pr-6">
        <span className="text-[14px] font-bold text-gray-600 leading-none mr-[18px]">⋮</span>
        <span className="border-y-4 border-r-[6px] border-y-transparent border-r-gray-600" />
        <span className="ml-[27px] w-[38px] h-[7px] rounded-full bg-gray-500" />
        <span className="ml-[450px] border-y-4 border-l-[6px] border-y-transparent border-l-gray-500" />
      </div>
      <footer className="h-[21px] shrink-0 flex items-center justify-between bg-gradient-to-r from-[#cfcfcf] via-[#e9e9e9] to-[#f6f6f6] pl-[11px] pr-2 text-[11px] text-gray-800 whitespace-nowrap">
        <div className="flex items-center">
          <span>準備完了</span>
          <span className="ml-5 mr-5 w-3.5 h-2.5 border border-gray-700 flex items-center justify-center">
            <span className="w-1.5 h-1.5 rounded-full bg-gray-700" />
          </span>
          <span className="font-bold">アクセシビリティ: 検討が必要です</span>
        </div>
        <div className="flex items-center">
          <button className="flex items-center gap-[2px] mr-5">
            <svg viewBox="0 0 14 12" className="w-3.5 h-3">
              <path d="M6 8.500H.5v-7h12v4" fill="none" stroke="#444" />
              <path d="M9 5v7M6 8.500h6M7 6l4 5M11 6l-4 5" stroke="#444" />
            </svg>
            表示設定
          </button>
          <button aria-label="標準" className="w-9 h-[21px] bg-[#e2e2e2] flex items-center justify-center">
            <svg viewBox="0 0 13 12" className="w-[13px] h-3">
              <path d="M.5.500h12v11H.5zM4.500.500v11M8.500.500v11M.5 4h12M.5 8h12" fill="none" stroke="#333" />
            </svg>
          </button>
          <button aria-label="ページ レイアウト" className="w-10 flex items-center justify-center">
            <svg viewBox="0 0 13 12" className="w-[13px] h-3">
              <path d="M.5.500h12v11H.5zM3.500 2.500h6v7h-6zM5 4.500h3M5 6h3M5 7.500h3" fill="none" stroke="#444" />
            </svg>
          </button>
          <button aria-label="改ページ プレビュー" className="w-9 flex items-center justify-center">
            <svg viewBox="0 0 13 12" className="w-[13px] h-3">
              <path d="M.5.500h12v11H.5zM5 .500v6M9 .500v6M5 6.500h7" fill="none" stroke="#444" />
            </svg>
          </button>
          <span className="ml-1.5 mr-1.5 w-[7px] h-px bg-gray-500" />
          <input
            type="range"
            aria-label="ズーム"
            defaultValue={50}
            className="appearance-none w-[94px] h-px bg-gray-500 [&::-webkit-slider-thumb]:appearance-none [&::-webkit-slider-thumb]:w-[5px] [&::-webkit-slider-thumb]:h-[11px] [&::-webkit-slider-thumb]:bg-gray-600"
          />
          <span className="w-5 pl-1 text-gray-500 text-[12px]">+</span>
          <span className="w-9 text-right text-[12px]">100%</span>
        </div>
      </footer>
    </>
  );
}

/* ---------- taskbar ---------- */

const apps = [
  { name: "スタート", icon: <WindowsIcon /> },
  { name: "タスク ビュー", icon: <TaskViewIcon /> },
  { name: "Copilot", icon: <CopilotIcon /> },
  { name: "Dell", icon: <DellIcon /> },
  { name: "エクスプローラー", icon: <FolderIcon />, open: true },
  { name: "Outlook", icon: <OutlookIcon />, open: true },
  { name: "Excel", icon: <ExcelIcon className="w-6 h-6" />, open: true },
  { name: "OneNote", icon: <OneNoteIcon />, open: true },
  { name: "メモ帳", icon: <NotepadIcon />, open: true },
  { name: "LINE アプリ", icon: <LineIcon /> },
  { name: "カレンダー 1", icon: <CalendarIcon /> },
  { name: "カレンダー 2", icon: <CalendarIcon /> },
  { name: "カレンダー 3", icon: <CalendarIcon badge="face" />, open: true },
  { name: "Chrome 1", icon: <ChromeIcon badge="photo" />, open: true },
  { name: "Chrome 2", icon: <ChromeIcon badge="face" /> },
  { name: "Chrome 3", icon: <ChromeIcon badge="face" /> },
  { name: "Chrome 4", icon: <ChromeIcon badge="yellow" /> },
  { name: "Chrome 5", icon: <ChromeIcon badge="text" /> },
  { name: "ノート", icon: <NotesAppIcon /> },
  { name: "プロフィール", icon: <PortraitIcon />, open: true },
  { name: "V", icon: <VIcon /> },
  { name: "W", icon: <WIcon /> },
  { name: "ミュージック", icon: <MusicIcon /> },
];

function AppButton({ name, icon, open }: { name: string; icon: React.ReactNode; open?: boolean }) {
  return (
    <button aria-label={name} className="w-8 h-full flex flex-col items-center pt-[9px]">
      {icon}
      {open && <span className="mt-1 w-1.5 h-[3px] rounded-full bg-gray-500" />}
    </button>
  );
}

function Taskbar() {
  return (
    <div className="h-[45px] shrink-0 flex items-stretch bg-gradient-to-r from-[#c3d8dc] via-[#c9dbe5] to-[#cfe3ec] border-t border-[#aebfc6]">
      <div className="flex-1 flex justify-between pl-5 pr-[7px]">
        {apps.map((a) => (
          <AppButton key={a.name} {...a} />
        ))}
      </div>
      <div className="w-[88px] shrink-0 flex items-stretch justify-between border-x border-[#aec3cd] px-[7px]">
        <AppButton name="フォト" icon={<PhotosIcon />} />
        <button aria-label="その他" className="w-8 flex items-center justify-center gap-1">
          <span className="w-[3px] h-[3px] rounded-full bg-black" />
          <span className="w-[3px] h-[3px] rounded-full bg-black" />
          <span className="w-[3px] h-[3px] rounded-full bg-black" />
        </button>
      </div>
      <div className="w-[385px] shrink-0 flex items-center justify-end pr-[19px] text-gray-800">
        <ChevronUp className="w-4 h-4" />
        <svg viewBox="0 0 17 12" className="w-[17px] h-3 ml-3.5">
          <path d="M4 11a3.200 3.200 0 0 1-.4-6.300A4.600 4.600 0 0 1 12.300 4.500 3.300 3.300 0 0 1 13 11z" fill="#aeb4b6" stroke="#222" />
        </svg>
        <svg viewBox="0 0 18 18" className="w-[18px] h-[18px] ml-3">
          <path d="M3 6a7 7 0 0 1 12-1M15 1.500V5h-3.500M2.500 12.500 6 16M2.500 16v-3.500H6" fill="none" stroke="#333" strokeWidth="1.200" />
          <circle cx="13" cy="13" r="4" fill="#f59a0c" />
        </svg>
        <Mic className="w-4 h-4 ml-3.5 text-[#2459a8]" />
        <span className="ml-3 w-5 text-center font-['Open_Sans'] text-[16px] leading-none">A</span>
        <Wifi className="w-4 h-4 ml-2.5" />
        <Volume2 className="w-4 h-4 ml-[7px]" />
        <svg viewBox="0 0 17 14" className="w-[17px] h-3.5 ml-[7px]">
          <rect x="1.500" y="4" width="12.500" height="8" rx="1.500" fill="#222" />
          <rect x="14.500" y="6.500" width="1.500" height="3" fill="#222" />
          <path d="M10 6.500h2.500v3H10z" fill="#cfe3ec" />
          <path d="M5 .500 1.500 6H4l-1 4 4-5.500H4.500z" fill="#222" stroke="#cfe3ec" strokeWidth="0.600" />
        </svg>
        <div className="w-[72px] text-right font-['Roboto'] text-[12px] leading-[15px] whitespace-nowrap">
          <div>15:55</div>
          <div>2024/11/14</div>
        </div>
        <svg viewBox="0 0 14 16" className="w-3.5 h-4 ml-2">
          <path d="M7 .500c3 0 5 2.200 5 5V10l1.500 2.500v.5H.5v-.5L2 10V5.500c0-2.800 2-5 5-5zM5 14h4c-.2 1-1 1.600-2 1.600S5.200 15 5 14z" fill="#0b4a9e" />
        </svg>
      </div>
    </div>
  );
}

function PreviewPopup() {
  return (
    <div className="absolute left-0 bottom-[57px] w-[808px] h-[140px] flex gap-[15px] px-[7px] rounded-r-lg bg-gradient-to-r from-[#f6f6f6] via-[#f4faf4] to-[#f8faf8] shadow-[0_2px_10px_rgba(0,0,0,0.35)]">
      {previews.map((p) => (
        <div key={p.title} className="flex-1 min-w-0">
          <div className="h-[33px] flex items-center gap-[7px] text-[11px] text-gray-800 whitespace-nowrap">
            <span className="shrink-0">{p.icon}</span>
            <span className="whitespace-pre">{p.title}</span>
            {p.close && (
              <button aria-label="閉じる" className="ml-auto mr-1">
                <X className="w-3 h-3" />
              </button>
            )}
          </div>
          {p.body}
        </div>
      ))}
    </div>
  );
}

function SharedScreen() {
  return (
    <div className="relative w-full aspect-video flex flex-col overflow-hidden bg-[#efefef] font-['Roboto','Noto_Sans_CJK_JP',sans-serif]">
      <TitleBar />
      <MenuBar />
      <QuickAccess />
      <FormulaBar />
      <div className="flex-1 min-h-0 flex flex-col font-['Liberation_Sans','Noto_Sans_CJK_JP',sans-serif]">
        <Sheet />
      </div>
      <StatusBar />
      <Taskbar />

      <PreviewPopup />
      <div className="absolute left-0 bottom-[207px] h-[26px] w-[226px] flex items-center pl-2 bg-[#f2f2f2] border border-[#ddd] rounded-sm shadow-md text-[12px] text-gray-700 whitespace-nowrap">
        確認書類作成用.xlsm - 修復済み - Excel
      </div>
      <svg viewBox="0 0 12 18" className="absolute left-[123px] bottom-[74px] w-3 h-[18px]" aria-hidden="true">
        <path d="M1 1v13l3-3 2.200 5 2-1-2.200-4.500H10.500z" fill="#fff" stroke="#222" />
      </svg>
    </div>
  );
}

function ParticipantTile() {
  return (
    <div className="relative ml-[3px] h-[270px] bg-[#111] flex items-center justify-center">
      <svg viewBox="0 0 118 118" className="w-[118px] h-[118px]" aria-label="小川慶一">
        <defs>
          <clipPath id="round">
            <circle cx="59" cy="59" r="59" />
          </clipPath>
        </defs>
        <g clipPath="url(#round)">
          <rect width="118" height="118" fill="#2f9bcf" />
          <path d="M60 27.500 91.500 83.500h-65z" fill="#fff" />
          <path d="M62.500 28 94.500 57v25.500z" fill="#fff" />
          <path
            d="M0 28h60M0 30.500l54 6.500M0 33.500l47.500 12.500M0 37.500l42.500 18M0 41.500l37.500 23M0 45l31.500 29M0 52l27 31"
            fill="none"
            stroke="#fff"
            strokeWidth="1.700"
          />
          <circle cx="17" cy="100" r="6" fill="#fff" />
          <path d="M12 96q4 6 10 10" stroke="#b3202a" strokeWidth="1" fill="none" />
        </g>
      </svg>
      <span className="absolute left-3 bottom-1 text-[18px] leading-[26px] text-gray-100">小川慶一</span>
    </div>
  );
}

export default function App() {
  return (
    <div className="min-h-screen flex bg-black font-['Noto_Sans_CJK_JP',sans-serif]">
      <main className="w-3/4 flex flex-col justify-center bg-[#111]">
        <SharedScreen />
      </main>
      <aside className="w-1/4 flex flex-col justify-center">
        <ParticipantTile />
      </aside>
    </div>
  );
}
